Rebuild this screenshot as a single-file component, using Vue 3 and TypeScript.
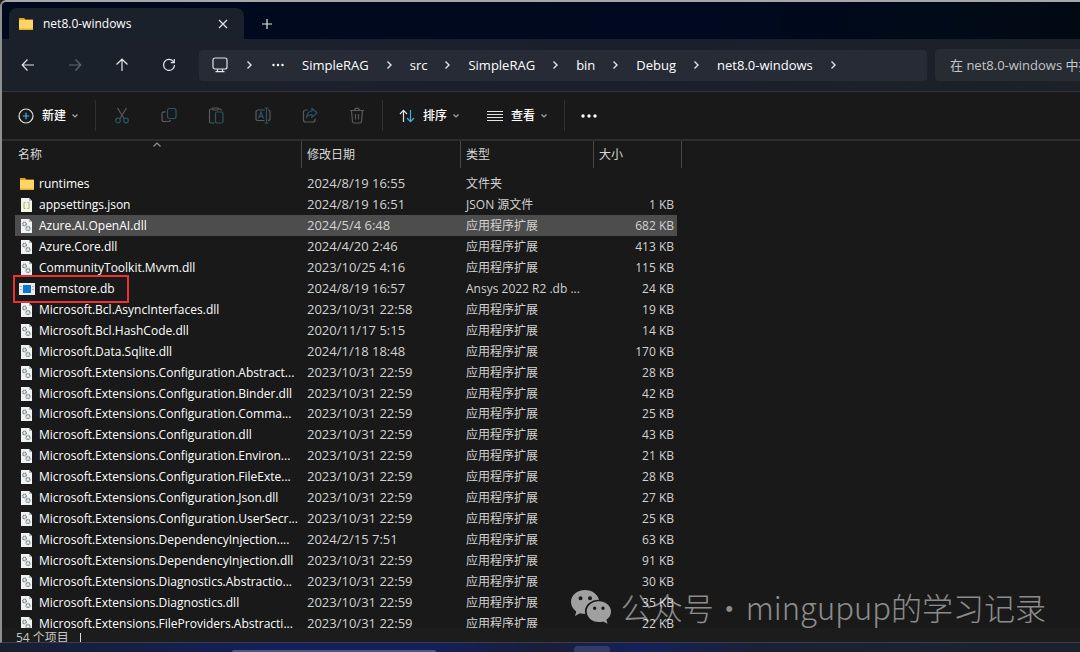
<script setup lang="ts">
type Kind = 'folder' | 'json' | 'dll' | 'db'

interface FileRow {
  name: string
  date: string
  type: string
  size: string
  kind: Kind
  selected?: boolean
  marked?: boolean
}

const dll = (name: string, date: string, size: number, selected = false): FileRow => ({
  name,
  date,
  type: '应用程序扩展',
  size: `${size} KB`,
  kind: 'dll',
  selected,
})

const files: FileRow[] = [
  { name: 'runtimes', date: '2024/8/19 16:55', type: '文件夹', size: '', kind: 'folder' },
  { name: 'appsettings.json', date: '2024/8/19 16:51', type: 'JSON 源文件', size: '1 KB', kind: 'json' },
  dll('Azure.AI.OpenAI.dll', '2024/5/4 6:48', 682, true),
  dll('Azure.Core.dll', '2024/4/20 2:46', 413),
  dll('CommunityToolkit.Mvvm.dll', '2023/10/25 4:16', 115),
  { name: 'memstore.db', date: '2024/8/19 16:57', type: 'Ansys 2022 R2 .db ...', size: '24 KB', kind: 'db', marked: true },
  dll('Microsoft.Bcl.AsyncInterfaces.dll', '2023/10/31 22:58', 19),
  dll('Microsoft.Bcl.HashCode.dll', '2020/11/17 5:15', 14),
  dll('Microsoft.Data.Sqlite.dll', '2024/1/18 18:48', 170),
  dll('Microsoft.Extensions.Configuration.Abstract...', '2023/10/31 22:59', 28),
  dll('Microsoft.Extensions.Configuration.Binder.dll', '2023/10/31 22:59', 42),
  dll('Microsoft.Extensions.Configuration.Comma...', '2023/10/31 22:59', 25),
  dll('Microsoft.Extensions.Configuration.dll', '2023/10/31 22:59', 43),
  dll('Microsoft.Extensions.Configuration.Environ...', '2023/10/31 22:59', 21),
  dll('Microsoft.Extensions.Configuration.FileExte...', '2023/10/31 22:59', 28),
  dll('Microsoft.Extensions.Configuration.Json.dll', '2023/10/31 22:59', 27),
  dll('Microsoft.Extensions.Configuration.UserSecr...', '2023/10/31 22:59', 25),
  dll('Microsoft.Extensions.DependencyInjection....', '2024/2/15 7:51', 63),
  dll('Microsoft.Extensions.DependencyInjection.dll', '2023/10/31 22:59', 91),
  dll('Microsoft.Extensions.Diagnostics.Abstractio...', '2023/10/31 22:59', 30),
  dll('Microsoft.Extensions.Diagnostics.dll', '2023/10/31 22:59', 35),
  dll('Microsoft.Extensions.FileProviders.Abstracti...', '2023/10/31 22:59', 22),
]

const crumbs = ['SimpleRAG', 'src', 'SimpleRAG', 'bin', 'Debug', 'net8.0-windows']
</script>

<template>
  <div class="desktop">
    <main class="window">
      <header class="tabs">
        <div class="tab">
          <svg class="folder" viewBox="0 0 16 14">
            <path d="M1 1h5l1.500 1.500H15V7H1z" fill="#e2a21c" />
            <rect x="1" y="3" width="14" height="10" rx="1" fill="#ffd566" />
            <path d="M1 11.500h14V12a1 1 0 0 1-1 1H2a1 1 0 0 1-1-1z" fill="#e9ad32" />
          </svg>
          <span class="tab-title">net8.0-windows</span>
          <button class="plain close" aria-label="关闭标签页">
            <svg viewBox="0 0 10 10" width="10" height="10"><path d="M1 1l8 8M9 1l-8 8" /></svg>
          </button>
        </div>
        <button class="plain add" aria-label="新建标签页">
          <svg viewBox="0 0 10 10" width="10" height="10"><path d="M5 0v10M0 5h10" /></svg>
        </button>
      </header>

      <nav class="navbar">
        <button class="plain nav-btn" aria-label="后退">
          <svg viewBox="0 0 14 14" width="14" height="14"><path d="M13 7H1.500M6.500 1.500L1.200 7l5.300 5.500" /></svg>
        </button>
        <button class="plain nav-btn off" aria-label="前进">
          <svg viewBox="0 0 14 14" width="14" height="14"><path d="M1 7h11.500M7.500 1.500L12.800 7l-5.300 5.500" /></svg>
        </button>
        <button class="plain nav-btn" aria-label="向上">
          <svg viewBox="0 0 14 14" width="14" height="14"><path d="M7 13V1.500M1.500 6.500L7 1.200l5.500 5.300" /></svg>
        </button>
        <button class="plain nav-btn" aria-label="刷新">
          <svg viewBox="0 0 14 14" width="14" height="14"><path d="M12.500 7a5.500 5.500 0 1 1-1.300-3.600L12.300 4.500M12.300 1v3.600H8.800" /></svg>
        </button>
        <div class="address">
          <button class="plain" aria-label="此电脑">
            <svg viewBox="0 0 16 16" width="16" height="16"><rect x="1" y="1" width="14" height="11" rx="2" /><path d="M5.500 12v2.500M10.500 12v2.500M3.500 14.700h9" /></svg>
          </button>
          <svg class="chev first" viewBox="0 0 6 8"><path d="M1.500 .5L5 4 1.500 7.500" /></svg>
          <button class="plain dots" aria-label="更多位置">
            <svg viewBox="0 0 12 4" width="12" height="4"><circle cx="1.500" cy="2" r="1.200" /><circle cx="6" cy="2" r="1.200" /><circle cx="10.500" cy="2" r="1.200" /></svg>
          </button>
          <template v-for="(crumb, i) in crumbs" :key="i">
            <button class="plain crumb">{{ crumb }}</button>
            <svg class="chev" viewBox="0 0 6 8"><path d="M1.500 .5L5 4 1.500 7.500" /></svg>
          </template>
        </div>
        <input class="search" type="search" placeholder="在 net8.0-windows 中搜索" aria-label="搜索" />
      </nav>

      <div class="commands">
        <button class="plain cmd">
          <svg viewBox="0 0 16 16" width="16" height="16"><circle cx="8" cy="8" r="7" /><path class="blue" d="M8 4.800v6.400M4.800 8h6.400" /></svg>
          <span>新建</span>
          <svg class="down" viewBox="0 0 8 6"><path d="M1.500 1.500L4 4l2.500-2.500" /></svg>
        </button>
        <i class="sep"></i>
        <div class="tools">
          <button class="plain tool" aria-label="剪切" disabled>
            <svg viewBox="0 0 16 17"><path d="M3.500 1l6.700 10.700M12.500 1L5.800 11.700" /><g class="teal"><circle cx="4" cy="13.500" r="2.300" /><circle cx="12" cy="13.500" r="2.300" /></g></svg>
          </button>
          <button class="plain tool" aria-label="复制" disabled>
            <svg viewBox="0 0 16 17"><path d="M4.500 4.800H3a2 2 0 0 0-2 2v5.700a2 2 0 0 0 2 2h4.500a2 2 0 0 0 2-1.500" /><rect class="teal" x="6.500" y="1.500" width="8.500" height="10" rx="2" /></svg>
          </button>
          <button class="plain tool" aria-label="粘贴" disabled>
            <svg viewBox="0 0 16 17"><path d="M4.500 2H3a1.500 1.500 0 0 0-1.500 1.500v11A1.500 1.500 0 0 0 3 16h3.500M10.500 2H12a1.500 1.500 0 0 1 1.500 1.500M4.500 1.800Q4.500 1 5.500 1h4q1 0 1 .8t-1 1.200h-4q-1-.2-1-1.200z" /><rect class="teal" x="7.500" y="5" width="7.500" height="11" rx="1.500" /></svg>
          </button>
          <button class="plain tool" aria-label="重命名" disabled>
            <svg viewBox="0 0 16 17"><path d="M9.500 3H3a2 2 0 0 0-2 2v6.500a2 2 0 0 0 2 2h6.500M13 3a2 2 0 0 1 2 2v6.500a2 2 0 0 1-2 2" /><path class="teal" d="M3.500 11.500L6 5l2.500 6.500M4.400 9.300h3.200M11.500 1v15M9.500 1h4M9.500 16h4" /></svg>
          </button>
          <button class="plain tool" aria-label="共享" disabled>
            <svg viewBox="0 0 16 17"><path d="M5.500 3H3.500a2 2 0 0 0-2 2v8a2 2 0 0 0 2 2H11a2 2 0 0 0 2-2v-1.500" /><path class="teal" d="M10 1.500l5 4.300-5 4.400V7.700Q6.500 7.500 4.500 10.200 5 4.500 10 4z" /></svg>
          </button>
          <button class="plain tool" aria-label="删除" disabled>
            <svg viewBox="0 0 16 17"><path d="M1 3.500h14M5.700 3.500a2.300 2.300 0 0 1 4.600 0M2.500 3.500l1 11A1.700 1.700 0 0 0 5.200 16h5.600a1.700 1.700 0 0 0 1.700-1.500l1-11M6.500 7v5.500M9.500 7v5.500" /></svg>
          </button>
        </div>
        <i class="sep"></i>
        <button class="plain cmd">
          <svg viewBox="0 0 16 16" width="16" height="16"><path d="M4.500 14V2.500M1 6l3.500-3.700L8 6" /><path class="blue" d="M11.500 2v11.500M8 10l3.500 3.700L15 10" /></svg>
          <span>排序</span>
          <svg class="down" viewBox="0 0 8 6"><path d="M1.500 1.500L4 4l2.500-2.500" /></svg>
        </button>
        <button class="plain cmd view">
          <svg viewBox="0 0 16 16" width="16" height="16"><path d="M0 3.500h16M0 6.500h16M0 9.500h16M0 12.500h16" /></svg>
          <span>查看</span>
          <svg class="down" viewBox="0 0 8 6"><path d="M1.500 1.500L4 4l2.500-2.500" /></svg>
        </button>
        <i class="sep"></i>
        <button class="plain dots more" aria-label="更多">
          <svg viewBox="0 0 16 4" width="16" height="4"><circle cx="2" cy="2" r="1.700" /><circle cx="8" cy="2" r="1.700" /><circle cx="14" cy="2" r="1.700" /></svg>
        </button>
      </div>

      <section class="list">
        <table>
          <colgroup>
            <col class="c-name" /><col class="c-date" /><col class="c-type" /><col class="c-size" />
          </colgroup>
          <thead>
            <tr>
              <th>
                <button class="plain head">名称</button>
                <svg class="sorted" viewBox="0 0 8 5"><path d="M.5 4.500L4 1l3.500 3.500" /></svg>
              </th>
              <th><button class="plain head">修改日期</button></th>
              <th><button class="plain head">类型</button></th>
              <th><button class="plain head">大小</button></th>
            </tr>
          </thead>
          <tbody>
            <tr v-for="file in files" :key="file.name" :class="{ selected: file.selected }">
              <td>
                <div class="name" :class="{ marked: file.marked }">
                  <svg v-if="file.kind === 'folder'" viewBox="0 0 16 14">
                    <path d="M1 1h5l1.500 1.500H15V7H1z" fill="#e2a21c" />
                    <rect x="1" y="3" width="14" height="10" rx="1" fill="#ffd566" />
                    <path d="M1 11.500h14V12a1 1 0 0 1-1 1H2a1 1 0 0 1-1-1z" fill="#e9ad32" />
                  </svg>
                  <svg v-else-if="file.kind === 'db'" viewBox="0 0 16 14">
                    <rect x="0" y="1" width="16" height="12" fill="#e8ecef" />
                    <path d="M1 4.500h2M1 7.500h2M13 4.500h2M13 7.500h2" stroke="#a5adb3" />
                    <rect x="4" y="3" width="8" height="8" fill="#0b78d0" />
                  </svg>
                  <svg v-else viewBox="0 0 16 14">
                    <path d="M2 0h8l3 3v11H2z" fill="#f1f3f3" />
                    <path d="M10 0v3h3z" fill="#aeb4b7" />
                    <path v-if="file.kind === 'json'" d="M6.500 4.500H5v6h1.500M8.500 4.500H10v6H8.500" fill="none" stroke="#b9b73a" />
                    <g v-else fill="none" stroke="#758087">
                      <circle cx="5.500" cy="5" r="1.700" stroke-dasharray="1 .5" stroke-width="1.500" />
                      <circle cx="9" cy="9.500" r="1.900" stroke-dasharray="1 .5" stroke-width="1.500" />
                    </g>
                  </svg>
                  <span>{{ file.name }}</span>
                </div>
              </td>
              <td class="date">{{ file.date }}</td>
              <td>{{ file.type }}</td>
              <td class="size">{{ file.size }}</td>
            </tr>
          </tbody>
        </table>
      </section>

      <footer class="status"><span>54 个项目</span><i class="bar"></i></footer>

      <div class="watermark">
        <svg viewBox="0 0 42 36" width="42" height="36">
          <path fill-rule="evenodd" d="M15 1C7 1 1 6.200 1 13c0 4 2 7.200 5.300 9.400L5 27l5-2.700c1.700.5 3.300.7 5.200.7C13.500 17 20 10.800 29 10.800 27.500 5 22 1 15 1zM10.500 7.200a2 2 0 1 1 0 4 2 2 0 0 1 0-4zm9.500 0a2 2 0 1 1 0 4 2 2 0 0 1 0-4z" />
          <path fill-rule="evenodd" d="M28.800 12.200C22 12.200 16.700 16.800 16.700 22.500S22 33 28.800 33c1.500 0 3-.2 4.300-.6l4.500 2.400-1.200-4c2.900-2 4.600-5 4.600-8.300 0-5.700-5.400-10.300-12.200-10.300zM24.700 17.500a1.700 1.700 0 1 1 0 3.400 1.700 1.700 0 0 1 0-3.400zm8.300 0a1.700 1.700 0 1 1 0 3.400 1.700 1.700 0 0 1 0-3.400z" />
        </svg>
        <span>公众号</span><span class="mid">·</span><span>mingupup的学习记录</span>
      </div>
    </main>
    <div class="taskbar"><i class="pill"></i><i class="chip"></i></div>
  </div>
</template>

<style>
body {
  background: #191919;
  overflow: hidden;
}
</style>

<style scoped>
.desktop {
  height: 100vh;
  box-sizing: border-box;
  display: flex;
  flex-direction: column;
  overflow: hidden;
  color: #fff;
  font: 13px/20px "Open Sans", "Noto Sans CJK SC", sans-serif;
}
svg {
  display: block;
  flex: none;
  overflow: visible;
}
.plain {
  display: flex;
  align-items: center;
  justify-content: center;
  flex: none;
  margin: 0;
  padding: 0;
  border: 0;
  background: none;
  color: inherit;
  font: inherit;
  white-space: nowrap;
}
.plain svg, .chev, .sorted {
  fill: none;
  stroke: #e2e3e5;
  stroke-width: 1.2;
}
.window {
  position: relative;
  flex: 1;
  min-height: 0;
  display: flex;
  flex-direction: column;
  border-top: 2px solid #a5a8aa;
  border-left: 2px solid #8d9090;
  border-bottom: 1px solid #3b3e48;
  border-top-left-radius: 6px;
  background: #191919;
}
.tabs {
  flex: none;
  height: 37px;
  display: flex;
  align-items: flex-end;
  padding-left: 7px;
  border-top-left-radius: 5px;
  background: linear-gradient(90deg, #000a1c, #00091f 65%, #010a13);
}
.tab {
  width: 235px;
  height: 31px;
  box-sizing: border-box;
  display: flex;
  align-items: center;
  padding: 0 16px 0 9px;
  border-radius: 8px 8px 0 0;
  background: #1b212b;
}
.folder {
  width: 16px;
  height: 14px;
}
.tab-title {
  flex: 1;
  margin-left: 9px;
  font-size: 12px;
  font-weight: 500;
}
.add {
  width: 46px;
  height: 31px;
}
.navbar {
  flex: none;
  height: 53px;
  box-sizing: border-box;
  display: flex;
  align-items: center;
  padding-left: 2px;
  border-bottom: 1px solid #34343b;
  background: linear-gradient(90deg, #1b212b, #1b1f2c 60%, #1b2127);
}
.nav-btn {
  width: 47px;
  height: 32px;
}
.off {
  opacity: .35;
}
.address {
  flex: 1;
  min-width: 0;
  height: 31px;
  display: flex;
  align-items: center;
  margin-left: 7px;
  padding-left: 13px;
  border-radius: 4px;
  background: #262b36;
}
.chev {
  width: 6px;
  height: 8px;
  margin: 0 18px 0 17px;
  stroke-width: 1.4;
}
.first {
  margin: 0 20px 0 18px;
}
.plain.dots svg {
  fill: #fff;
  stroke: none;
}
.address .dots {
  margin-right: 18px;
}
.search {
  flex: none;
  width: 200px;
  height: 32px;
  box-sizing: border-box;
  margin: 0 -55px 0 8px;
  padding: 0 15px;
  border: 0;
  border-radius: 4px;
  background: #272b32;
  color: #fff;
  font: inherit;
}
.search::placeholder {
  color: #c3c5c8;
}
.commands {
  flex: none;
  height: 47px;
  display: flex;
  align-items: center;
  padding-left: 16px;
  border-bottom: 2px solid #2d2d2d;
}
.cmd {
  font-size: 12px;
  font-weight: 500;
}
.cmd span {
  margin: 0 5px 0 8px;
}
.plain .down {
  width: 8px;
  height: 6px;
  stroke: #a8a8a8;
}
.view {
  margin-left: 27px;
}
.plain .blue {
  stroke: #3fb2ee;
}
.sep {
  width: 1px;
  height: 31px;
  margin: 0 16px;
  background: #303030;
}
.tools {
  display: flex;
  margin: 0 -14px;
}
.tool {
  width: 47px;
  height: 32px;
}
.plain.tool svg {
  width: 16px;
  height: 17px;
  stroke: #5a5a5a;
}
.plain.tool .teal {
  stroke: #285468;
}
.list {
  flex: 1;
  min-height: 0;
  overflow: hidden;
}
table {
  width: 680px;
  height: 492px;
  table-layout: fixed;
  border-collapse: collapse;
}
.c-name { width: 300px; }
.c-date { width: 159px; }
.c-type { width: 133px; }
.c-size { width: 88px; }
th {
  position: relative;
  height: 32px;
  padding: 0;
  vertical-align: top;
  font-weight: 400;
}
.head {
  width: 100%;
  height: 27px;
  justify-content: flex-start;
  padding-left: 5px;
  border-right: 1px solid #484848;
  color: #d8d8d8;
  font-size: 12px;
}
th:first-child .head {
  padding-left: 16px;
}
.sorted {
  position: absolute;
  top: 1px;
  left: 151px;
  width: 8px;
  height: 5px;
  stroke: #929292;
}
td {
  padding: 2px 0 0 5px;
  font-size: 12px;
  line-height: 18px;
  white-space: nowrap;
  color: #d2d2d2;
}
td:first-child {
  padding-left: 13px;
}
.name {
  position: relative;
  display: flex;
  align-items: center;
  gap: 4px;
  padding-left: 4px;
  color: #fff;
}
.name svg {
  width: 16px;
  height: 14px;
}
td.date {
  padding-top: 0;
  font-size: 13px;
}
td.size {
  padding: 2px 8px 0 0;
  text-align: right;
}
.selected {
  background: linear-gradient(#4d4d4d, #4d4d4d) 13px 0 / 662px 100% no-repeat;
}
.marked::after {
  content: "";
  position: absolute;
  inset: -5px auto -5px -2px;
  width: 112px;
  border: 2px solid #ea3232;
}
.status {
  flex: none;
  height: 14px;
  display: flex;
  align-items: flex-start;
  overflow: hidden;
  padding-left: 14px;
  background: #1c1c1c;
  color: #c8c8c8;
  font-size: 12px;
}
.bar {
  width: 1px;
  height: 10px;
  margin: 5px 0 0 11px;
  background: #ddd;
}
.watermark {
  position: absolute;
  right: 34px;
  bottom: 12px;
  display: flex;
  align-items: center;
  color: rgba(255, 255, 255, .5);
  font: 300 31px/46px "Noto Sans CJK SC", sans-serif;
  white-space: nowrap;
}
.watermark svg {
  margin-right: 9px;
  fill: #a0a0a0;
}
.mid {
  width: 32px;
}
.taskbar {
  flex: none;
  height: 9px;
  display: flex;
  align-items: flex-end;
  overflow: hidden;
  padding-left: 232px;
  background: linear-gradient(90deg, #18202f, #13205b 25%, #14205a 40%, #1a1e36 51%, #14225a 59%, #1a2135 70%, #1b222c);
}
.pill {
  width: 204px;
  height: 2px;
  border-radius: 6px 6px 0 0;
  background: #50587c;
}
.chip {
  width: 36px;
  height: 6px;
  margin-left: 138px;
  border-radius: 4px 4px 0 0;
  background: #343c66;
}
</style>
